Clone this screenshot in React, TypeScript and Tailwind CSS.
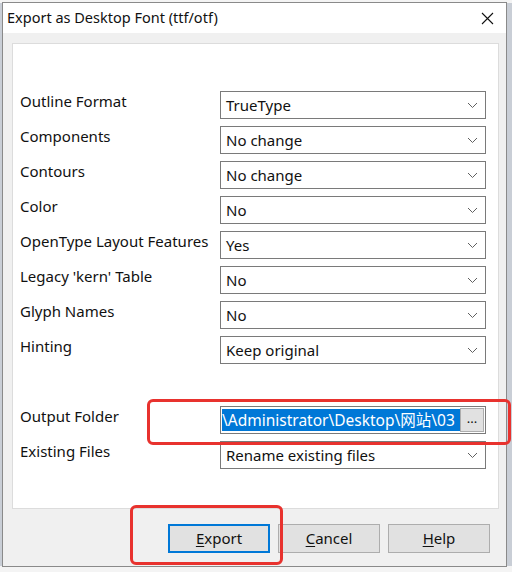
import React from 'react'

const FONT = { fontFamily: '"Noto Sans", "Noto Sans CJK SC", sans-serif' }

const ROWS: [string, string][] = [
  ['Outline Format', 'TrueType'],
  ['Components', 'No change'],
  ['Contours', 'No change'],
  ['Color', 'No'],
  ['OpenType Layout Features', 'Yes'],
  ["Legacy 'kern' Table", 'No'],
  ['Glyph Names', 'No'],
  ['Hinting', 'Keep original'],
]

function Chevron() {
  return (
    <svg width="11" height="7" viewBox="0 0 11 7" className="shrink-0">
      <polyline points="1,1 5.5,5.5 10,1" fill="none" stroke="#606060" strokeWidth="1" />
    </svg>
  )
}

function Select({ value }: { value: string }) {
  return (
    <div className="flex items-center justify-between w-[266px] h-[28px] border border-[#7a7a7a] bg-white pl-[5px] pr-[7px] text-[15px] text-[#111]">
      <span>{value}</span>
      <Chevron />
    </div>
  )
}

function Row({ label, children }: { label: string; children: React.ReactNode }) {
  return (
    <div className="flex items-center h-[28px]">
      <div className="w-[200px] text-[15px] text-[#111] pb-[7px] whitespace-nowrap">{label}</div>
      {children}
    </div>
  )
}

function Button({ label, underline, focused }: { label: string; underline: string; focused?: boolean }) {
  return (
    <div
      className={`w-[102px] h-[29px] flex items-center justify-center bg-[#e1e1e1] text-[15px] text-[#111] ${
        focused ? 'border-2 border-[#0078d7]' : 'border border-[#adadad]'
      }`}
    >
      <span>
        <span className="underline underline-offset-2">{underline}</span>
        {label.slice(underline.length)}
      </span>
    </div>
  )
}

export default function App() {
  return (
    <div className="relative w-[512px] h-[572px] bg-[#c9ced6] overflow-hidden" style={FONT}>
      <div className="absolute left-0 right-0 top-0 h-[3px] bg-[#f4f4f4]" />
      <div className="absolute left-0 right-0 bottom-0 h-[6px] bg-[#f4f4f4]" />
      <div className="relative ml-[2px] mt-[2px] w-[505px] h-[565px] border border-[#8a8a8a] bg-[#f0f0f0] flex flex-col">
        {/* title bar */}
        <div className="h-[30px] bg-white flex items-center justify-between pl-[4px] pr-[12px]">
          <span className="text-[14.5px] text-[#111]">Export as Desktop Font (ttf/otf)</span>
          <svg width="13" height="13" viewBox="0 0 13 13">
            <path d="M1 1 L12 12 M12 1 L1 12" stroke="#111" strokeWidth="1.1" />
          </svg>
        </div>

        {/* content panel */}
        <div className="mt-[10px] ml-[9px] w-[487px] h-[466px] bg-white border border-[#dcdcdc] pl-[7px] pt-[47px] flex flex-col">
          <div className="flex flex-col gap-[7px]">
            {ROWS.map(([label, value]) => (
              <Row key={label} label={label}>
                <Select value={value} />
              </Row>
            ))}
          </div>

          <div className="flex flex-col gap-[7px] mt-[42px]">
            <Row label="Output Folder">
              <div className="flex items-center w-[266px] h-[28px] border border-[#7a7a7a] bg-white pl-[1px] pr-[1px]">
                <span className="bg-[#0078d7] text-white text-[15.5px] h-[22px] leading-[22px] w-[239px] overflow-hidden whitespace-nowrap">
                  \Administrator\Desktop\网站\03
                </span>
                <div className="ml-auto w-[24px] h-[24px] bg-[#e1e1e1] border border-[#adadad] flex items-center justify-center text-[13px] text-[#111] leading-none pb-[4px]">
                  ...
                </div>
              </div>
            </Row>
            <Row label="Existing Files">
              <Select value="Rename existing files" />
            </Row>
          </div>
        </div>

        {/* buttons */}
        <div className="mt-[15px] flex gap-[8px] pl-[165px]">
          <Button label="Export" underline="E" focused />
          <Button label="Cancel" underline="C" />
          <Button label="Help" underline="H" />
        </div>
      </div>

      {/* red annotation boxes */}
      <div className="absolute left-[147px] top-[399px] w-[364px] h-[46px] border-[3px] border-[#e8322e] rounded-[6px]" />
      <div className="absolute left-[130px] top-[505px] w-[153px] h-[60px] border-[3px] border-[#e8322e] rounded-[6px]" />
    </div>
  )
}
